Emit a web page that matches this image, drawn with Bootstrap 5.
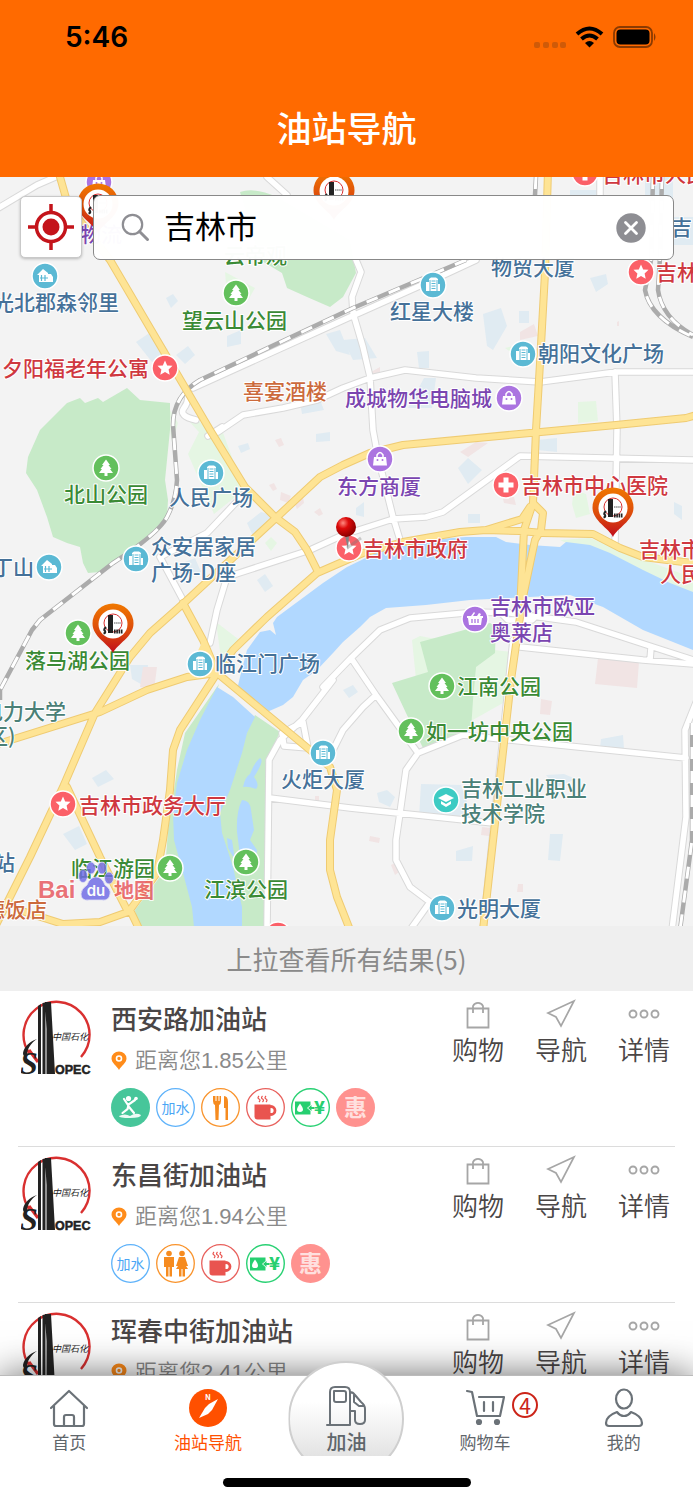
<!DOCTYPE html>
<html lang="zh-CN">
<head>
<meta charset="utf-8">
<meta name="viewport" content="width=device-width, initial-scale=1">
<title>油站导航</title>
<link href="https://cdn.jsdelivr.net/npm/bootstrap@5.3.0/dist/css/bootstrap.min.css" rel="stylesheet">
<style>
  body { font-family: "Liberation Sans", "Noto Sans CJK SC", sans-serif; color: #4a4646; }
  .topbar { background: #ff6a00; }
  .clock { font: 600 28px/36px Inter, sans-serif; }
  .page-title { font: 500 35px/48px "Noto Sans CJK SC", sans-serif; }
  .statusbar { padding: 19px 35px 0 65px; }
  .title-row { padding: 48px 0 26px; }
  .map-svg text { font-family: "Noto Sans CJK SC", sans-serif; font-size: 21px; font-weight: 500; }
  .lbl text { paint-order: stroke; stroke: #fff; stroke-width: 2px; stroke-linejoin: round; }
  .search-row { top: 18px; left: 20px; right: 19px; gap: 11px; }
  .locate { width: 62px; height: 62px; background: #fff; border: 1px solid #c9c9c9; border-radius: 5px; box-shadow: 0 1px 3px rgba(0,0,0,.25); margin-top: 1px; }
  .search-box { height: 65px; background: rgba(255,255,255,.98); border: 1px solid #888; border-radius: 7px; padding: 0 27px; gap: 14px; }
  .search-box input { font: 400 31px/46px "Noto Sans CJK SC", sans-serif; color: #000; outline: 0; min-width: 0; padding: 0 0 6px; }
  .peek { background: #efefef; color: #8a8a8a; font: 400 26px/65px "Noto Sans CJK SC", sans-serif; height: 65px; }
  .station { margin: 0 18px; padding: 7px 5px 18px 3px; border-bottom: 1px solid #dcdcdc; min-height: 156px; }
  .station-logo { margin-top: 1px; }
  .station-name { font: 500 26px/40px "Noto Sans CJK SC", sans-serif; color: #4a4646; }
  .distance { font-size: 22px; line-height: 34px; font-weight: 350; color: #8a8a8a; margin-top: 6px; gap: 8px; }
  .tags { gap: 6px; margin-top: 10px; }
  .tags svg { width: 39px; height: 39px; }
  .actions { gap: 31px; }
  .act { color: #4a4646; font: 350 26px/38px "Noto Sans CJK SC", sans-serif; width: 52px; }
  .act svg { width: 32px; height: 32px; }
  .tabs-foot { z-index: 2; background: #fff; box-shadow: 0 0 36px rgba(0,0,0,.6); border-top: 1px solid #bbb; }
  .tab { padding-top: 12px; height: 81px; color: #5f666b; font: 400 17px/26px "Noto Sans CJK SC", sans-serif; }
  .tab svg { width: 40px; height: 40px; display: block; margin-bottom: 1px; overflow: visible; }
  .tab.on { color: #ff5000; }
  .fuel { top: -15px; left: 50%; margin-left: -58px; width: 116px; height: 116px; border-radius: 50%; border: 2px solid #cfcfcf; background: linear-gradient(#fff 35%, #e2e2e2 85%); clip-path: inset(0 0 21px 0); padding-top: 22px; color: #5f666b; font: 500 20px/28px "Noto Sans CJK SC", sans-serif; }
  .fuel svg { width: 42px; height: 42px; }
  .cart-count { top: 16px; left: 50%; margin-left: 27px; width: 26px; height: 26px; border: 2px solid #cc2418; color: #cc2418; font: 400 21px/22px "Noto Sans CJK SC", sans-serif; border-radius: 50%; }
  .home-bar { width: 248px; height: 9px; border-radius: 5px; background: #000; margin: 21px auto 13px; }
</style>
</head>
<body class="bg-white">

<svg width="0" height="0" class="position-absolute" aria-hidden="true">
  <defs>
    <linearGradient id="pinfill" x1="0" y1="0" x2="0" y2="1"><stop offset="0" stop-color="#f07800"/><stop offset=".55" stop-color="#dc4a0c"/><stop offset="1" stop-color="#c00d1c"/></linearGradient>
    <radialGradient id="ball" cx=".35" cy=".3" r=".7"><stop offset="0" stop-color="#ff8a80"/><stop offset=".4" stop-color="#dd0a0a"/><stop offset="1" stop-color="#8c0000"/></radialGradient>
    <symbol id="sinopec" viewBox="0 0 70 76" overflow="visible">
      <path d="M8 54 A33 33 0 1 1 60 58" fill="none" stroke="#d93030" stroke-width="2.400"/>
      <path d="M8 51 L17 63" stroke="#d93030" stroke-width="3"/>
      <path d="M17 7 L20 5 V75 H17z M21.500 4 L24.500 3.500 V75 H21.500z M25.500 3.500 L30 3 V75 H25.500z M24 3 L30 3 L34 75 H28z" fill="#222"/>
      <path d="M16 40 C9 42 3 48 2 54 C2 58 5 58 6 56 C6 50 10 44 16 40z" fill="#222"/>
      <text x="-1" y="75" font-family="Liberation Serif, serif" font-weight="700" font-style="italic" font-size="32" fill="#222">S</text>
      <text x="34" y="75" font-family="Liberation Sans, sans-serif" font-weight="700" font-size="12.500" fill="#222" stroke="#222" stroke-width=".5">OPEC</text>
      <text x="31" y="41" font-family="Noto Sans CJK SC, sans-serif" font-style="italic" font-size="9" font-weight="400" fill="#222">中国石化</text>
    </symbol>
    <symbol id="pin" viewBox="0 0 42 50">
      <path d="M21 50 C17 41 .5 34 .5 20.500 A20.500 20 0 0 1 41.500 20.500 C41.500 34 25 41 21 50z" fill="url(#pinfill)"/>
      <circle cx="21" cy="21" r="14.500" fill="#fff"/>
      <circle cx="21" cy="20" r="9" fill="none" stroke="#d93030"/>
      <path d="M16 12h5v18h-5z" fill="#222"/><path d="M22 20h7" stroke="#555" stroke-dasharray="1.500 .6"/>
      <path d="M14 24 q-3 3 -1 4 q1 2-1.500 2.500" stroke="#222" stroke-width="2" fill="none"/>
      <path d="M22 28.500h9" stroke="#222" stroke-width="4" stroke-dasharray="1.600 .7"/>
    </symbol>
    <g id="poi-b"><circle r="13" fill="#5bb9d4" stroke="#fff" stroke-width="1.500"/><path d="M-7 6V-3h3v-3l2-1.500h5l2 1.500V-1h2v7z" fill="#fff"/><path d="M-3-5V6M-1.500-4h4M-1.500-1.500h4M-1.500 1h4M-1.500 3.500h4M4-5V6" stroke="#5bb9d4"/></g>
    <g id="poi-h"><circle r="13" fill="#5bb9d4" stroke="#fff" stroke-width="1.500"/><path d="M-8-1L-2-7 3-3V-2h3l2 3v5H-6V-1z" fill="#fff"/><path d="M-3.500-1v6M0-1v6M-5 2h8" stroke="#5bb9d4" stroke-width="1.200"/></g>
    <g id="poi-g"><circle r="13" fill="#63c05c" stroke="#fff" stroke-width="1.500"/><path d="M0-8.500L4-3H2.500L5.500 1H4l3 4H1.500V8h-3V5H-7l3-4h-1.500l3-4H-4z" fill="#fff"/></g>
    <g id="poi-s"><circle r="13" fill="#fb6068" stroke="#fff" stroke-width="1.500"/><path d="M0-7.500L2.200-2.600 7.500-2.200 3.600 1.400 4.700 6.700 0 4-4.700 6.700-3.600 1.400-7.500-2.200-2.200-2.600z" fill="#fff"/></g>
    <g id="poi-c"><circle r="13" fill="#fb6068" stroke="#fff" stroke-width="1.500"/><path d="M-2.500-7.500h5v5h5v5h-5v5h-5v-5h-5v-5h5z" fill="#fff"/></g>
    <g id="poi-p"><circle r="13" fill="#ab74e0" stroke="#fff" stroke-width="1.500"/><path d="M-6-2H6L7 6.500H-7z" fill="#fff"/><path d="M-3-1V-4q3-5 6 0v3" fill="none" stroke="#fff" stroke-width="1.500"/><circle cx="-2.500" cy="1" r="1" fill="#ab74e0"/><circle cx="2.500" cy="1" r="1" fill="#ab74e0"/></g>
    <g id="poi-m"><circle r="13" fill="#ab74e0" stroke="#fff" stroke-width="1.500"/><path d="M-8-3H-4l3-4 1 1-2 3H2L4-6 6-5 5-3H8V-1H7L6 6H-6L-7-1H-8z" fill="#fff"/><path d="M-3 0v4M0 0v4M3 0v4" stroke="#ab74e0" stroke-width="1.300"/></g>
    <g id="poi-e"><circle r="13" fill="#3ccbc3" stroke="#fff" stroke-width="1.500"/><path d="M-8-2L0-6 8-2 0 2z M-5 1L0 4 5 1V4L0 7-5 4z" fill="#fff"/></g>

    <symbol id="i-bag" viewBox="0 0 32 32"><path d="M5.500 10.500h21v19h-21z M11 15V8a5.500 5.500 0 0 1 10 0v7" fill="none" stroke="#a6a6a6" stroke-width="1.800"/></symbol>
    <symbol id="i-send" viewBox="0 0 32 32"><path d="M29 3L3 15l8 4 5 9z" fill="none" stroke="#a6a6a6" stroke-width="1.700"/></symbol>
    <symbol id="i-more" viewBox="0 0 32 32"><g fill="none" stroke="#a6a6a6" stroke-width="1.900"><circle cx="5" cy="16" r="3.500"/><circle cx="16" cy="16" r="3.500"/><circle cx="27" cy="16" r="3.500"/></g></symbol>
    <symbol id="i-place" viewBox="0 0 16 20"><path d="M8 19C6 15 .5 12 .5 7.500a7.500 7 0 0 1 15 0C15.500 12 10 15 8 19z" fill="#ff8c1a"/><circle cx="8" cy="7.500" r="2.500" fill="#ff8c1a" stroke="#fff" stroke-width="1.600"/></symbol>

    <symbol id="t-wash" viewBox="0 0 39 39"><circle cx="19.500" cy="19.500" r="19.500" fill="#47c69a"/><g stroke="#fff" fill="none" stroke-linecap="round" stroke-width="2.200"><path d="M13 11l4 6 7-5M17.500 17l-1 4-5 4M18 19l5 6"/></g><circle cx="17.500" cy="10.500" r="2.600" fill="#fff"/><circle cx="25" cy="10.500" r="1.800" fill="#fff"/><path d="M8 28q6-3 11 0 6-4 11-1 0 3-11 3T8 28z" fill="#fff" opacity=".9"/></symbol>
    <symbol id="t-water" viewBox="0 0 39 39"><circle cx="19.500" cy="19.500" r="18.800" fill="#fff" stroke="#5eb2fa" stroke-width="1.300"/><text x="19.500" y="24.500" text-anchor="middle" font-family="Noto Sans CJK SC, sans-serif" font-size="14" fill="#4aa6f5">加水</text></symbol>
    <symbol id="t-food" viewBox="0 0 39 39"><circle cx="19.500" cy="19.500" r="18.800" fill="#fff" stroke="#f9932b" stroke-width="1.300"/><path d="M12 8v5q0 3 2 4l.5 15h3L18 17q2-1 2-4V8h-1.500v5h-1V8h-2v5h-1V8z M23 8q4 0 4 6v18h-2.500V20H23z" fill="#f68b1f"/></symbol>
    <symbol id="t-cup" viewBox="0 0 39 39"><circle cx="19.500" cy="19.500" r="18.800" fill="#fff" stroke="#e8605c" stroke-width="1.300"/><path d="M8.500 16.500h16v15h-13q-3 0-3-3z" fill="#e9544f"/><circle cx="25" cy="22.500" r="4" fill="none" stroke="#e9544f" stroke-width="2.800"/><path d="M13 8q-2 2 0 3t0 3M16.500 8q-2 2 0 3t0 3M20 8q-2 2 0 3t0 3" fill="none" stroke="#e9544f" stroke-width="1.200"/></symbol>
    <symbol id="t-pay" viewBox="0 0 39 39"><circle cx="19.500" cy="19.500" r="18.800" fill="#fff" stroke="#29d173" stroke-width="1.400"/><path d="M4 13.500h15.500v3.500l-3.500 3 3.500 3v3.500H4z" fill="#26cf70"/><path d="M9 15.500q6 8 0 8.500-6-.5 0-8.500z" fill="#fff"/><path d="M17 20l3.500-3v2h3v2h-3v2z" fill="#26cf70"/><text x="23" y="26" font-family="Noto Sans CJK SC, sans-serif" font-weight="900" font-size="18" fill="#26cf70">¥</text></symbol>
    <symbol id="t-deal" viewBox="0 0 39 39"><circle cx="19.500" cy="19.500" r="19.500" fill="#ff928f"/><text x="19.500" y="28" text-anchor="middle" font-family="Noto Sans CJK SC, sans-serif" font-weight="700" font-size="23" fill="#ffe0df">惠</text></symbol>
    <symbol id="t-wc" viewBox="0 0 39 39"><circle cx="19.500" cy="19.500" r="18.800" fill="#fff" stroke="#f9932b" stroke-width="1.300"/><g fill="#f68b1f"><circle cx="13" cy="9.500" r="2.800"/><circle cx="26" cy="9.500" r="2.800"/><path d="M8 13h10v10h-2v9.500h-2.500V23h-1v9.500H10V23H8z M23 13h6l3 9h-2l2 3h-3v7.500h-2.500V25h-1v7.500H23V25h-3l2-3h-2z"/></g></symbol>
  </defs>
</svg>

<div class="vh-100 d-flex flex-column overflow-hidden">

  <header class="topbar flex-shrink-0">
    <div class="statusbar d-flex justify-content-between align-items-center text-black">
      <span class="clock">5:46</span>
      <svg width="124" height="30" viewBox="0 0 124 30" role="img" aria-label="Wi-Fi 与电量">
        <g fill="#cf5a08"><rect x="0" y="20" width="6" height="6" rx="2"/><rect x="9" y="20" width="6" height="6" rx="2"/><rect x="18" y="20" width="6" height="6" rx="2"/><rect x="26" y="20" width="6" height="6" rx="2"/></g>
        <g fill="none" stroke="#000" stroke-width="4"><path d="M43 12q12.500-11 25 0"/><path d="M47.500 17q8-7 16 0"/></g><path d="M51 21q4.500-4 9 0l-4.500 4.500z"/>
        <rect x="80" y="5" width="38" height="20" rx="6" fill="none" stroke="#8a3a02" stroke-width="1.800"/><rect x="82.500" y="7.500" width="33" height="15" rx="4"/><path d="M120 11q3 4 0 8z" fill="#8a3a02"/>
      </svg>
    </div>
    <div class="title-row text-center text-white"><h1 class="page-title m-0">油站导航</h1></div>
  </header>

  <section class="position-relative flex-shrink-0" aria-label="地图">
    <svg class="map-svg d-block w-100" viewBox="0 177 693 749">
      <rect y="177" width="693" height="750" fill="#f3f3f3"/>
      <!-- building blocks -->
      <g fill="#e0ebf2">
        <path d="M136 342l18 -12 14 20-16 12zM176 355l12-9 7 9-10 9zM166 298l7-4 5 7-7 7zM227 336l14-6 0 14-14 3zM326 334l14-4 10 25-14-4zM343 340l22-2 12 20-24 2zM483 314l18-6 6 18-14 24-6-4zM519 311h10v12h-10zM590 278l16-4 2 10-12 8zM417 352l12-1 0 17h-10zM424 378h12l-4 30h-24zM300 402l20-2 4 10-22 4zM458 468l10-10 14 12-14 14zM537 440l20-2v14l-20-2zM468 514h12v9h-12zM356 508l8-6 0 15-8-2zM674 502l8 4 0 14-8-6zM238 446l10-3 2 6-9 4zM316 434l14-2 0 9-14 1zM247 523l14-11 14 4-22 20zM257 580l8-6 8 12-8 6zM175 566l20-8 6 14-18 4zM92 778l14-8 8 9-16 8zM63 834l16-8 8 18-12 6zM130 665l18 0-2 22-14-8zM421 784l40 1 12 34-54-2zM377 793l10-3 8 7-5 10-11-5zM550 834h13l-3 27-12-1zM456 851l17-5-1 15h-16zM601 739l22-4 1 14-24-1zM343 690l10-5 5 7-9 6zM546 775l18-1 12 5-20 8z"/>
        <path d="M645 177h28v24h-28zM674 217h19v28h-19zM570 190h28v12h-28z"/>
      </g>
      <g fill="#f1e4e4"><path d="M143 667l14 0-3 23-14-3zM598 658l41 4-2 26-42-4zM541 699l11 2-2 14-10-1zM460 452l16-10 12 1-20 14zM275 440l6-2 3 7-5 2zM269 485l5-2 3 6-4 2zM281 492l10 4-3 7-8-3zM314 512l6-4 3 6-4 2zM294 502l9-5 1 6-7 6zM520 332l14-8 4 12-18 4zM371 372l9-5 0 9-8 1zM370 836l10 2-1 5-10-2zM391 865l4-2 4 9-4 3zM518 884h5v8h-6zM482 827l8 1-1 8-8-1zM502 495l12 2 2 8-12-2zM617 322l2-1v5h-2zM315 796h4v7h-4z"/></g>
      <!-- parks -->
      <g fill="#e5f6e3">
        <path d="M225 272l30 16-8 14-20-6zM200 430l22 0 22 60-30 24-26-60zM265 543l6-6 6 6-6 8zM578 402l18-1 2 20-20 2zM574 490l12 4 4 20-14 4-4-14zM216 622l26 20-20 24zM166 403l12 20-6 20zM188 420l12 2 14 14-6 6zM505 348l22-6-2 20zM412 640l8-4 74 14 19 2-10 51-80 45zM560 540l30-2 34 14 69 26v22l-50-20z"/>
      </g>
      <g fill="#c7eac8">
        <path d="M40 430L67 403 80 398 85 403 98 398 103 402 127 388 140 400 170 403 170 430 165 480 168 500 167 517 140 543 120 560 100 572 88 573 83 563 80 547 67 543 53 537 47 517 37 490 26 473 28 457z"/>
        <path d="M240 192Q255 187 277 197L350 240 356 273 343 297 330 307 307 297 287 288 282 273 260 260z"/>
        <path d="M420 642L490 623 496 627 495 653 476 667 473 700 471 730 423 748 406 713 392 683 428 672z"/>
        <path d="M219 684L185 733 177 770 168 830 165 870 135 910 137 927H200L185 800zM255 715L280 732 268 757 267 847 264 927H230L210 810z"/>
      </g>
      <!-- river -->
      <g fill="#b1d8ff">
        <path d="M693 592L670 583 643 570 610 553 590 545 566 542 560 547 530 545 506 542 496 537 466 537 426 540 376 553 347 567 323 583 300 600 277 617 273 623 276 635 270 630 260 632 247 650 240 677 237 690 267 712 283 705 293 697 303 680 317 670 333 653 343 642 360 627 370 617 386 608 426 605 470 600 510 598 570 595 603 607 643 630 693 650z"/>
        <path d="M217 687L200 720 187 750 177 783 173 813 174 840 183 873 192 907 194 927H242V907L233 867 222 833 220 813 230 790 242 753 247 733 255 717 233 697z"/>
        <path d="M260 758q5 2-6 19 6 8 2 12-8-3-13-2 2-10 7-13 4-11 10-16zM242 800q8 0 9 10l3 20-4 10 7 10-3 20-14-2-1-20-2-16q-1-20 5-32zM227 838l5 2 3 20-7-12z"/>
      </g>
      <!-- streets: casing, then surface -->
      <g fill="none" stroke-linejoin="round" stroke-linecap="round">
        <path d="M-5 210L37 185 60 175M267 177L287 195M193 388L350 317 433 280 476 260M356 260L361 272 352 297 353 313 363 347 370 377 373 430 378 457 393 517 400 540M218 432L243 415 283 408 317 400 343 388 370 378 405 370 476 378 540 382 616 372 693 372M600 177V195M615 372L617 430 615 543M187 390Q190 400 184 408T196 420M208 436L222 427M227 577L310 550 343 535 393 519 426 517 443 512 520 456 693 460M227 577L217 610 210 643M245 493L207 533 160 557 183 600M323 687L351 658 380 630 410 618 476 612 510 613 576 622 653 647 693 660M520 647L643 660 693 664M651 648L650 660M500 612L508 620 532 620 540 612M351 658L376 695 418 753 463 735 510 740 686 758M418 753L406 770 400 813 396 840 396 860 410 887 430 902 410 930M333 680L302 720 280 740 269 760 267 930M270 798L350 808 493 823M333 750L343 730 363 707 376 695M282 733L303 722 308 748 284 746zM697 700L685 730 686 817 672 930M513 640L483 930" stroke="#d9d9d9" stroke-width="7.500"/>
        <path d="M-5 210L37 185 60 175M267 177L287 195M193 388L350 317 433 280 476 260M356 260L361 272 352 297 353 313 363 347 370 377 373 430 378 457 393 517 400 540M218 432L243 415 283 408 317 400 343 388 370 378 405 370 476 378 540 382 616 372 693 372M600 177V195M615 372L617 430 615 543M187 390Q190 400 184 408T196 420M208 436L222 427M227 577L310 550 343 535 393 519 426 517 443 512 520 456 693 460M227 577L217 610 210 643M245 493L207 533 160 557 183 600M323 687L351 658 380 630 410 618 476 612 510 613 576 622 653 647 693 660M520 647L643 660 693 664M651 648L650 660M500 612L508 620 532 620 540 612M351 658L376 695 418 753 463 735 510 740 686 758M418 753L406 770 400 813 396 840 396 860 410 887 430 902 410 930M333 680L302 720 280 740 269 760 267 930M270 798L350 808 493 823M333 750L343 730 363 707 376 695M282 733L303 722 308 748 284 746zM697 700L685 730 686 817 672 930M513 640L483 930" stroke="#fff" stroke-width="5.500"/>
        <!-- railways -->
        <g stroke-linecap="butt">
          <path d="M466 260L353 308 200 380Q173 396 173 425L177 480Q176 500 167 517T113 563L40 620 32 630 0 690V700M536 177L535 195M653 177L651 260 645 290Q650 318 693 337M662 177L660 257 658 290Q662 318 693 335M692 723V840L680 930" stroke="#ababab" stroke-width="4.500"/>
          <path d="M466 260L353 308 200 380Q173 396 173 425L177 480Q176 500 167 517T113 563L40 620 32 630 0 690V700M536 177L535 195M653 177L651 260 645 290Q650 318 693 337M662 177L660 257 658 290Q662 318 693 335M692 723V840L680 930" stroke="#fff" stroke-width="3" stroke-dasharray="12 12"/>
        </g>
        <path d="M58 170L68 205 110 260 167 357 210 430 245 487 275 517 295 532 307 550 318 572M-5 927L30 857 63 787 95 713 130 657 150 633 185 602 277 517 320 477 343 465 370 453 403 445 530 433 616 425 686 418 700 414M548 170L545 273 540 363 536 430 533 503 524 530 521 590 520 617 511 680 495 823 483 930M700 564L643 557 620 548 593 534 543 533 520 531 486 530 460 532 403 542 363 553 317 573 267 617 233 650 217 673 180 730 173 750 170 790 163 840 157 873 130 910 142 935M533 503L543 513 541 530 535 540 523 597M486 530L522 519 530 507M183 603L203 640 217 673 310 750 330 767 337 790 330 840 330 870 337 897 350 930M217 673L187 677 147 690 100 712 -5 745M67 787L100 857 128 912 100 922 63 924 22 911" stroke="#efcb72" stroke-width="8"/>
        <path d="M58 170L68 205 110 260 167 357 210 430 245 487 275 517 295 532 307 550 318 572M-5 927L30 857 63 787 95 713 130 657 150 633 185 602 277 517 320 477 343 465 370 453 403 445 530 433 616 425 686 418 700 414M548 170L545 273 540 363 536 430 533 503 524 530 521 590 520 617 511 680 495 823 483 930M700 564L643 557 620 548 593 534 543 533 520 531 486 530 460 532 403 542 363 553 317 573 267 617 233 650 217 673 180 730 173 750 170 790 163 840 157 873 130 910 142 935M533 503L543 513 541 530 535 540 523 597M486 530L522 519 530 507M183 603L203 640 217 673 310 750 330 767 337 790 330 840 330 870 337 897 350 930M217 673L187 677 147 690 100 712 -5 745M67 787L100 857 128 912 100 922 63 924 22 911" stroke="#fee495" stroke-width="6"/>
        <path d="M203 640L217 673 190 678 196 655z" fill="#fee495"/>
      </g>
      <!-- place labels -->
      <g class="lbl" fill="#457199">
        <text x="-7" y="310">光北郡森邻里</text><text x="491" y="275">物贸大厦</text><text x="390" y="319">红星大楼</text><text x="538" y="361">朝阳文化广场</text><text x="169" y="505">人民广场</text><text x="151" y="554">众安居家居</text><text x="151" y="580">广场-D座</text><text x="-8" y="575">丁山</text><text x="215" y="671">临江门广场</text><text x="281" y="787">火炬大厦</text><text x="457" y="916">光明大厦</text><text x="-6" y="870">站</text><text x="671" y="235">吉</text>
      </g>
      <g class="lbl" fill="#3a8a35">
        <text x="224" y="263">云帝观</text><text x="182" y="328">望云山公园</text><text x="64" y="502">北山公园</text><text x="25" y="668">落马湖公园</text><text x="457" y="694">江南公园</text><text x="426" y="739">如一坊中央公园</text><text x="71" y="876">临江游园</text><text x="204" y="897">江滨公园</text>
      </g>
      <g class="lbl" fill="#cf3840">
        <text x="2" y="376">夕阳福老年公寓</text><text x="521" y="493">吉林市中心医院</text><text x="363" y="556">吉林市政府</text><text x="639" y="557">吉林市</text><text x="660" y="582">人民</text><text x="79" y="813">吉林市政务大厅</text><text x="656" y="280">吉林</text><text x="602" y="182">吉林市人民</text>
      </g>
      <g class="lbl" fill="#7a45b0">
        <text x="80" y="242">物流</text><text x="345" y="406">成城物华电脑城</text><text x="337" y="494">东方商厦</text><text x="490" y="614">吉林市欧亚</text><text x="490" y="640">奥莱店</text>
      </g>
      <g class="lbl" fill="#cc6a3c"><text x="243" y="399">喜宴酒楼</text><text x="-16" y="917">德饭店</text></g>
      <g class="lbl" fill="#4a8077"><text x="461" y="796">吉林工业职业</text><text x="461" y="821">技术学院</text><text x="-18" y="719">电力大学</text><text x="-13" y="744">区)</text></g>
      <!-- place markers -->
      <use href="#poi-h" x="45" y="276"/><use href="#poi-b" x="433" y="285"/><use href="#poi-b" x="523" y="354"/><use href="#poi-b" x="211" y="473"/><use href="#poi-h" x="49" y="567"/><use href="#poi-b" x="136" y="559"/><use href="#poi-b" x="200" y="664"/><use href="#poi-b" x="323" y="753"/><use href="#poi-b" x="442" y="908"/>
      <use href="#poi-g" x="236" y="293"/><use href="#poi-g" x="106" y="468"/><use href="#poi-g" x="78" y="633"/><use href="#poi-g" x="442" y="686"/><use href="#poi-g" x="411" y="731"/><use href="#poi-g" x="246" y="862"/><use href="#poi-g" x="170" y="868"/>
      <use href="#poi-s" x="165" y="368"/><use href="#poi-s" x="641" y="272"/><use href="#poi-s" x="349" y="548"/><use href="#poi-s" x="63" y="804"/><use href="#poi-c" x="506" y="485"/><use href="#poi-c" x="585" y="173"/><use href="#poi-c" x="278" y="935"/>
      <use href="#poi-p" x="509" y="398"/><use href="#poi-p" x="380" y="459"/><use href="#poi-m" x="475" y="619"/><use href="#poi-p" x="99" y="182"/><use href="#poi-e" x="446" y="800"/>
      <!-- station pins -->
      <use href="#pin" x="77" y="183" width="42" height="50"/><use href="#pin" x="313" y="170" width="42" height="50"/><use href="#pin" x="592" y="487" width="42" height="50"/><use href="#pin" x="92" y="603" width="42" height="50"/>
      <path d="M347 548l14-10" stroke="#777" stroke-width="3" opacity=".35"/><path d="M345 535h4l-1 15z" fill="#808585"/><circle cx="346" cy="527" r="10" fill="url(#ball)"/>
      <!-- map provider mark -->
      <g opacity=".82">
        <g class="lbl" fill="#e8565c"><text x="38" y="898" style="font:700 24px 'Liberation Sans',sans-serif">Bai</text><text x="114" y="898" style="font-weight:700;font-size:20px">地图</text></g>
        <g fill="#6e69e6" stroke="#dcdcf5" stroke-width=".8"><ellipse cx="83" cy="876" rx="4.500" ry="6.500"/><ellipse cx="91" cy="868" rx="4.500" ry="6"/><ellipse cx="102" cy="868" rx="4.500" ry="6"/><ellipse cx="109" cy="878" rx="4.500" ry="6"/><path d="M96 877q6 0 9 8 6 4 5 9-1 7-8 6h-13q-8 1-8-6 0-5 6-9 3-8 9-8z"/></g>
        <text x="96" y="896" text-anchor="middle" fill="#fff" style="font:600 15px Inter,sans-serif">du</text>
      </g>
    </svg>

    <div class="search-row position-absolute d-flex align-items-start">
      <button type="button" class="locate p-0 flex-shrink-0 d-flex align-items-center justify-content-center" aria-label="定位">
        <svg width="46" height="46" viewBox="0 0 46 46"><g stroke="#c4141b" fill="none"><circle cx="23" cy="23" r="14.500" stroke-width="3.500"/><path d="M23 0v9M23 37v9M0 23h9M37 23h9" stroke-width="3.500"/></g><circle cx="23" cy="23" r="8.500" fill="#c4141b"/></svg>
      </button>
      <div class="search-box d-flex flex-grow-1 align-items-center">
        <label for="city" class="d-flex flex-shrink-0" aria-label="搜索城市"><svg width="29" height="29" viewBox="0 0 29 29"><circle cx="11.500" cy="11.500" r="9.700" fill="none" stroke="#8e8e93" stroke-width="2.200"/><path d="M18.500 18.500l8 8" stroke="#8e8e93" stroke-width="3" stroke-linecap="round"/></svg></label>
        <input id="city" type="text" class="flex-grow-1 border-0 bg-transparent" value="吉林市">
        <button type="button" class="border-0 bg-transparent p-0 d-flex" aria-label="清除"><svg width="30" height="30" viewBox="0 0 30 30"><circle cx="15" cy="15" r="14.700" fill="#8e8e93"/><path d="M9.500 9.500l11 11M20.500 9.500l-11 11" stroke="#fff" stroke-width="2.800" stroke-linecap="round"/></svg></button>
      </div>
    </div>
  </section>

  <div class="peek text-center flex-shrink-0">上拉查看所有结果(5)</div>

  <main class="flex-grow-1 overflow-hidden">
    <article class="station d-flex align-items-start">
      <svg width="70" height="76" class="station-logo flex-shrink-0 me-3" role="img" aria-label="中国石化"><use href="#sinopec"/></svg>
      <div class="flex-grow-1 ps-1">
        <h2 class="station-name m-0">西安路加油站</h2>
        <div class="distance d-flex align-items-center"><svg width="16" height="20"><use href="#i-place"/></svg>距离您1.85公里</div>
        <div class="tags d-flex"><svg><use href="#t-wash"/></svg><svg><use href="#t-water"/></svg><svg><use href="#t-food"/></svg><svg><use href="#t-cup"/></svg><svg><use href="#t-pay"/></svg><svg><use href="#t-deal"/></svg></div>
      </div>
      <div class="actions d-flex">
        <a href="#shop" class="act text-center text-decoration-none"><svg class="d-block mx-auto"><use href="#i-bag"/></svg>购物</a>
        <a href="#go" class="act text-center text-decoration-none"><svg class="d-block mx-auto"><use href="#i-send"/></svg>导航</a>
        <a href="#info" class="act text-center text-decoration-none"><svg class="d-block mx-auto"><use href="#i-more"/></svg>详情</a>
      </div>
    </article>
    <article class="station d-flex align-items-start">
      <svg width="70" height="76" class="station-logo flex-shrink-0 me-3" role="img" aria-label="中国石化"><use href="#sinopec"/></svg>
      <div class="flex-grow-1 ps-1">
        <h2 class="station-name m-0">东昌街加油站</h2>
        <div class="distance d-flex align-items-center"><svg width="16" height="20"><use href="#i-place"/></svg>距离您1.94公里</div>
        <div class="tags d-flex"><svg><use href="#t-water"/></svg><svg><use href="#t-wc"/></svg><svg><use href="#t-cup"/></svg><svg><use href="#t-pay"/></svg><svg><use href="#t-deal"/></svg></div>
      </div>
      <div class="actions d-flex">
        <a href="#shop" class="act text-center text-decoration-none"><svg class="d-block mx-auto"><use href="#i-bag"/></svg>购物</a>
        <a href="#go" class="act text-center text-decoration-none"><svg class="d-block mx-auto"><use href="#i-send"/></svg>导航</a>
        <a href="#info" class="act text-center text-decoration-none"><svg class="d-block mx-auto"><use href="#i-more"/></svg>详情</a>
      </div>
    </article>
    <article class="station d-flex align-items-start">
      <svg width="70" height="76" class="station-logo flex-shrink-0 me-3" role="img" aria-label="中国石化"><use href="#sinopec"/></svg>
      <div class="flex-grow-1 ps-1">
        <h2 class="station-name m-0">珲春中街加油站</h2>
        <div class="distance d-flex align-items-center"><svg width="16" height="20"><use href="#i-place"/></svg>距离您2.41公里</div>
      </div>
      <div class="actions d-flex">
        <a href="#shop" class="act text-center text-decoration-none"><svg class="d-block mx-auto"><use href="#i-bag"/></svg>购物</a>
        <a href="#go" class="act text-center text-decoration-none"><svg class="d-block mx-auto"><use href="#i-send"/></svg>导航</a>
        <a href="#info" class="act text-center text-decoration-none"><svg class="d-block mx-auto"><use href="#i-more"/></svg>详情</a>
      </div>
    </article>
  </main>

  <footer class="tabs-foot position-relative flex-shrink-0">
    <nav class="row row-cols-5 g-0" aria-label="主导航">
      <a href="#home" class="tab col d-flex flex-column align-items-center text-decoration-none">
        <svg viewBox="0 0 40 40" fill="none" stroke="#6b7278" stroke-width="2.200" stroke-linejoin="round" stroke-linecap="round"><path d="M2 20L20 3l18 17M5 18v18q0 2 2 2h26q2 0 2-2V18M15 38V29q0-2 2-2h6q2 0 2 2v9"/></svg>首页</a>
      <a href="#stations" class="tab on col d-flex flex-column align-items-center text-decoration-none" aria-current="page">
        <svg viewBox="0 0 40 40"><circle cx="20" cy="20" r="19" fill="#ff5000"/><path d="M30 11l-6 11-4 4-9 4 6-10 4-4z" fill="#fff"/><text x="20" y="11.500" text-anchor="middle" fill="#fff" font-family="Inter, sans-serif" font-weight="700" font-size="7">N</text></svg>油站导航</a>
      <div class="tab col position-relative p-0">
        <a href="#fuel" class="fuel position-absolute d-flex flex-column align-items-center text-decoration-none">
          <svg viewBox="0 0 42 42" fill="none" stroke="#6b7278" stroke-width="2" stroke-linejoin="round" stroke-linecap="round"><path d="M2 40h22M5 40V7q0-5 5-5h10q5 0 5 5v33M9 6h10q2 0 2 2v7q0 2-2 2h-8q-2 0-2-2zM25 7q3 0 5 3l6 7q4 3 4 7v11q0 4-5 4t-5-4V26h-4M29 10v7l5 4h5"/></svg>加油</a>
      </div>
      <a href="#cart" class="tab col d-flex flex-column align-items-center text-decoration-none position-relative">
        <svg viewBox="0 0 40 40" fill="none" stroke="#6b7278" stroke-width="2.200" stroke-linejoin="round" stroke-linecap="round"><path d="M2 3l5 1 5 24h23l4-19H14M19 14v9M28 14v9"/><circle cx="14" cy="34" r="2" fill="#6b7278"/><circle cx="32" cy="34" r="2" fill="#6b7278"/></svg>购物车
        <span class="cart-count position-absolute text-center">4</span></a>
      <a href="#me" class="tab col d-flex flex-column align-items-center text-decoration-none">
        <svg viewBox="0 0 40 40" fill="none" stroke="#6b7278" stroke-width="2.200" stroke-linejoin="round" stroke-linecap="round"><ellipse cx="20" cy="11" rx="8" ry="9.500"/><path d="M13 24q3 4 7 4t7-4q11 4 11 11 0 3-3 3H5q-3 0-3-3 0-7 11-11z"/></svg>我的</a>
    </nav>
    <div class="home-bar"></div>
  </footer>
</div>

<script src="https://cdn.jsdelivr.net/npm/bootstrap@5.3.0/dist/js/bootstrap.bundle.min.js"></script>
</body>
</html>
